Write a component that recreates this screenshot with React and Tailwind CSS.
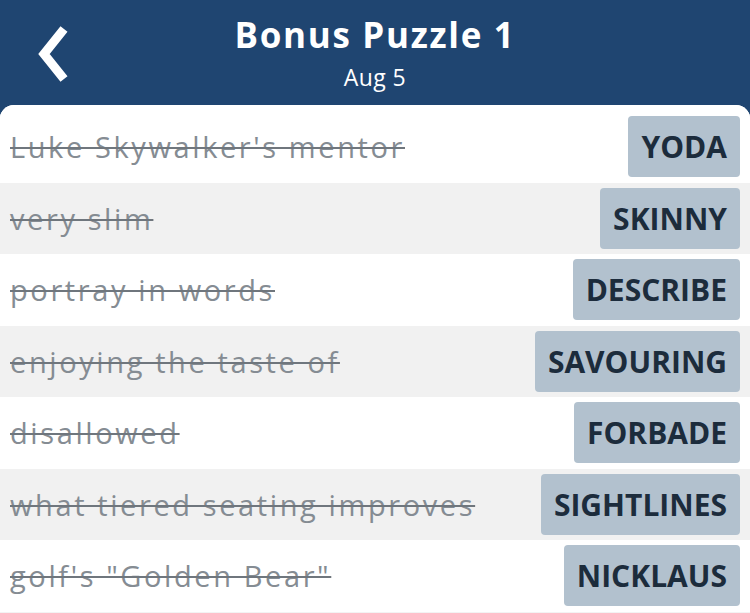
import React from 'react';

const clues = [
  { clue: "Luke Skywalker's mentor", answer: 'YODA' },
  { clue: 'very slim', answer: 'SKINNY' },
  { clue: 'portray in words', answer: 'DESCRIBE' },
  { clue: 'enjoying the taste of', answer: 'SAVOURING' },
  { clue: 'disallowed', answer: 'FORBADE' },
  { clue: 'what tiered seating improves', answer: 'SIGHTLINES' },
  { clue: 'golf\'s "Golden Bear"', answer: 'NICKLAUS' },
];

export default function App() {
  return (
    <div className="w-[750px] h-[613px] bg-[#1f4571] overflow-hidden flex flex-col" style={{ fontFamily: '"Open Sans", "Noto Sans", sans-serif' }}>
      {/* Header */}
      <header className="relative h-[105px] flex flex-col items-center text-white shrink-0">
        <button className="absolute left-[29px] top-[24px] w-[50px] h-[60px] flex items-center justify-center">
          <svg width="40" height="58" viewBox="0 0 40 58">
            <polyline points="30,4 10,29 30,54" fill="none" stroke="white" strokeWidth="9" strokeLinecap="butt" strokeLinejoin="miter" />
          </svg>
        </button>
        <h1 className="mt-[11px] text-[35px] leading-[48px] font-bold tracking-[1.7px]">Bonus Puzzle 1</h1>
        <p className="mt-[3px] text-[23px] leading-[30px] tracking-[0.4px]">Aug 5</p>
      </header>

      {/* Clue list */}
      <div className="flex-1 bg-[#f3f3f3] rounded-t-[14px] overflow-hidden">
        <div className="bg-white pt-[6px]">
          {clues.map((c, i) => (
            <div
              key={c.answer}
              className={`h-[71.5px] flex items-center justify-between pl-[10px] pr-[10px] ${i % 2 === 1 ? 'bg-[#f1f1f1]' : 'bg-white'}`}
            >
              <span className="text-[29px] tracking-[2.6px] text-[#858c93] line-through decoration-[#6f767d] decoration-2">{c.clue}</span>
              <span className="h-[61px] flex items-center px-[13px] bg-[#b2c1ce] rounded-[4px] text-[30px] font-bold text-[#1c2c3c]">
                {c.answer}
              </span>
            </div>
          ))}
        </div>
      </div>
    </div>
  );
}
